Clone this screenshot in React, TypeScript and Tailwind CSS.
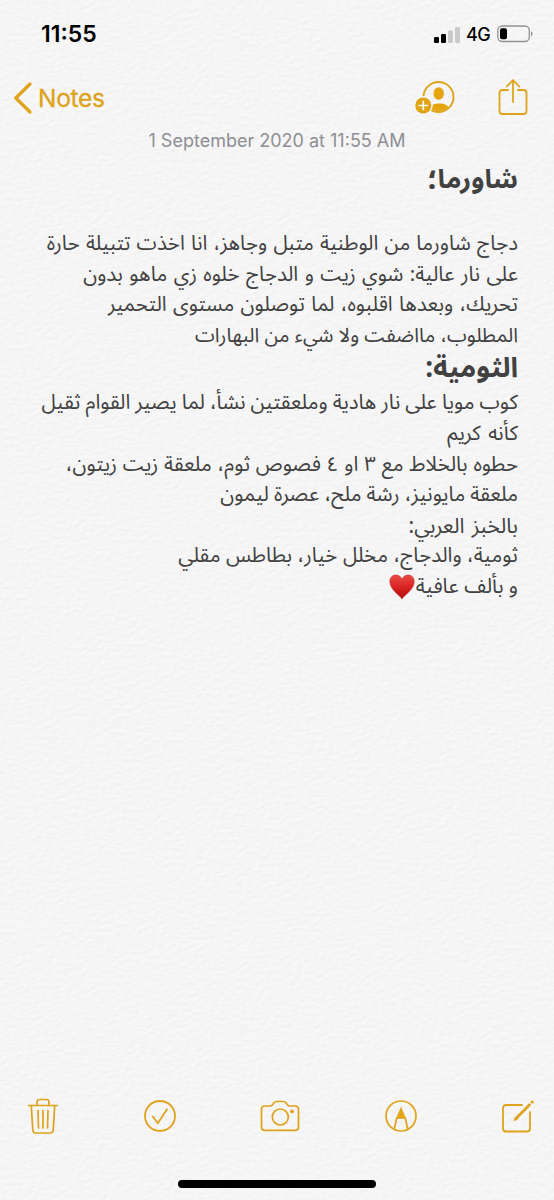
import React from "react";

type Line = { text: string; kind?: "heading"; className: string };

const lines: Line[] = [
  { text: "شاورما؛", kind: "heading", className: "h-[35px] text-[26.5px]" },
  { text: "", className: "h-[32px]" },
  { text: "دجاج شاورما من الوطنية متبل وجاهز، انا اخذت تتبيلة حارة", className: "h-[30px] [word-spacing:0.8px]" },
  { text: "على نار عالية: شوي زيت و الدجاج خلوه زي ماهو بدون", className: "h-[31px] [word-spacing:1.1px]" },
  { text: "تحريك، وبعدها اقلبوه، لما توصلون مستوى التحمير", className: "h-[30px] [word-spacing:1.1px]" },
  { text: "المطلوب، مااضفت ولا شيء من البهارات", className: "h-[31px] text-[20px] [word-spacing:0px]" },
  { text: "الثومية:", kind: "heading", className: "h-[36px] text-[27.8px]" },
  { text: "كوب مويا على نار هادية وملعقتين نشأ، لما يصير القوام ثقيل", className: "h-[31px] [word-spacing:-0.3px]" },
  { text: "كأنه كريم", className: "h-[31px] [word-spacing:2px]" },
  { text: "حطوه بالخلاط مع ٣ او ٤ فصوص ثوم، ملعقة زيت زيتون،", className: "h-[31px] [word-spacing:0.5px]" },
  { text: "ملعقة مايونيز، رشة ملح، عصرة ليمون", className: "h-[30px] [word-spacing:-0.2px]" },
  { text: "بالخبز العربي:", className: "h-[31px] text-[21px] [word-spacing:2px]" },
  { text: "ثومية، والدجاج، مخلل خيار، بطاطس مقلي", className: "h-[30px] [word-spacing:0.2px]" },
];

function Paper() {
  return (
    <svg className="pointer-events-none absolute inset-0 h-full w-full" aria-hidden="true">
      <filter id="paper" x="0" y="0" width="100%" height="100%" colorInterpolationFilters="sRGB">
        <feTurbulence type="fractalNoise" baseFrequency="0.16 0.26" numOctaves="2" seed="4" />
        <feDiffuseLighting lightingColor="#ffffff" surfaceScale="0.18" diffuseConstant="1">
          <feDistantLight azimuth="60" elevation="74" />
        </feDiffuseLighting>
      </filter>
      <rect width="100%" height="100%" filter="url(#paper)" />
    </svg>
  );
}

function StatusBar() {
  return (
    <div className="flex h-[70px] items-start justify-between pl-[41px] pr-[21px]">
      <span className="mt-[20px] text-[23px] font-semibold leading-[28px] text-black">11:55</span>
      <div className="mt-[20px] flex h-[28px] items-center">
        <svg width="26" height="17" viewBox="0 0 26 17">
          <rect x="0" y="11" width="5" height="6" rx="1.3" />
          <rect x="7" y="8" width="5" height="9" rx="1.3" />
          <rect x="14" y="4.5" width="5" height="12.5" rx="1.3" fill="#cacaca" />
          <rect x="21" y="1" width="5" height="16" rx="1.3" fill="#cacaca" />
        </svg>
        <span className="ml-[6px] mt-[2px] w-[25px] text-[18px] font-medium leading-[28px] tracking-[-0.5px] text-black">4G</span>
        <svg className="ml-[6px]" width="36" height="18" viewBox="0 0 36 18">
          <rect x="0.8" y="1" width="31.5" height="15.5" rx="4.5" fill="none" stroke="#929292" strokeWidth="1.3" />
          <rect x="3" y="3.3" width="7" height="11" rx="2" />
          <path d="M34 6.2c2.1.9 2.1 4.3 0 5.2z" fill="#929292" />
        </svg>
      </div>
    </div>
  );
}

function NavBar() {
  return (
    <div className="flex h-[56px] items-center justify-between pl-[13px] pr-[26px]">
      <div className="flex items-center">
        <svg width="19" height="32" viewBox="0 0 19 32" fill="none" stroke="#dfa21b" strokeWidth="3.2" strokeLinecap="round" strokeLinejoin="round">
          <path d="M17 2 2.8 16 17 30" />
        </svg>
        <span className="ml-[6px] text-[24.5px] leading-[32px] tracking-[-0.3px] text-[#dfa21b] [-webkit-text-stroke:0.3px]">Notes</span>
      </div>
      <div className="flex items-center">
        <svg width="40" height="34" viewBox="0 0 40 34">
          <defs>
            <clipPath id="avatar"><circle cx="23.5" cy="16" r="14" /></clipPath>
          </defs>
          <circle cx="23.5" cy="16" r="15" fill="none" stroke="#dfa21b" strokeWidth="1.9" />
          <g clipPath="url(#avatar)" fill="#e5a50f">
            <ellipse cx="23.7" cy="12.5" rx="5.2" ry="6.2" />
            <path d="M12 31c1-6 6-8.500 12-8.500s10 2 12 8.500z" />
          </g>
          <circle cx="8.3" cy="24.5" r="9.5" fill="#f5f5f5" />
          <circle cx="8.3" cy="24.5" r="8" fill="#e2a312" />
          <path d="M8.300 19.700v9.600M3.500 24.500h9.600" stroke="#fff" strokeWidth="1.7" />
        </svg>
        <svg className="ml-[43px]" width="30" height="38" viewBox="0 0 30 38" fill="none" stroke="#dfa21b" strokeWidth="1.8" strokeLinecap="round" strokeLinejoin="round">
          <path d="M10 11H4.500Q1.500 11 1.500 14V32Q1.500 35 4.500 35h21q3 0 3-3V14q0-3-3-3H20M15 23V1.500M8.800 7.500 15 1l6.200 6.500" />
        </svg>
      </div>
    </div>
  );
}

function Heart() {
  return (
    <svg className="mr-[1px] shrink-0" width="26" height="26" viewBox="0 0 26 26">
      <defs>
        <linearGradient id="heart" x1="0" y1="0" x2="0" y2="1">
          <stop offset="0" stopColor="#e94b45" />
          <stop offset="0.5" stopColor="#d92522" />
          <stop offset="1" stopColor="#ad080d" />
        </linearGradient>
      </defs>
      <path d="M13 25C10.500 21 .8 15.500.8 7.600.8 3.600 3.500 1 6.800 1 9.800 1 12 2.800 13 5.200 14 2.800 16.200 1 19.200 1c3.300 0 6 2.600 6 6.600C25.200 15.500 15.500 21 13 25Z" fill="url(#heart)" stroke="#b7302d" strokeWidth=".6" />
    </svg>
  );
}

function Toolbar() {
  return (
    <div className="flex h-[40px] items-center justify-between pl-[27px] pr-[19px] text-[#dfa21b]">
      <svg width="32" height="38" viewBox="0 0 32 38" fill="none" stroke="currentColor" strokeWidth="1.7" strokeLinecap="round" strokeLinejoin="round">
        <path d="M1.500 8.500h29M10 8V5q0-2.500 2.500-2.500h7Q22 2.500 22 5v3M4.300 9l1.500 24q.2 3 3 3h14.400q2.800 0 3-3L27.700 9M11 13.500l.5 17.500M16 13.500V31M21 13.500 20.500 31" />
      </svg>
      <svg width="34" height="34" viewBox="0 0 34 34" fill="none" stroke="currentColor" strokeWidth="1.8" strokeLinecap="round" strokeLinejoin="round">
        <circle cx="17" cy="17" r="15" />
        <path d="m9.800 17.500 5 6.700L24 10.300" />
      </svg>
      <svg width="40" height="34" viewBox="0 0 40 34" fill="none" stroke="currentColor" strokeWidth="1.7" strokeLinejoin="round">
        <path d="M4.500 7h6q1 0 1.800-1L14 3.800Q15 2.500 16.500 2.500h7Q25 2.500 26 3.800l1.700 2.200q.8 1 1.800 1h6q3 0 3 3v18.300q0 3-3 3h-31q-3 0-3-3V10q0-3 3-3Z" />
        <circle cx="20.3" cy="18" r="8" />
        <circle cx="32" cy="12.3" r="1.9" fill="currentColor" stroke="none" />
      </svg>
      <svg width="34" height="34" viewBox="0 0 34 34" fill="none" stroke="currentColor" strokeWidth="1.7" strokeLinejoin="round">
        <circle cx="17" cy="17" r="15" />
        <path d="m10.300 30 2.500-11.200h8.400L23.700 30" />
        <path d="m17 8.500 4.200 10.300h-8.400Z" fill="#e5a50f" strokeWidth=".8" />
      </svg>
      <svg width="34" height="36" viewBox="0 0 34 36" fill="none" stroke="currentColor" strokeWidth="1.8" strokeLinecap="round" strokeLinejoin="round">
        <path d="M21 7H5Q2 7 2 10v20.500q0 3 3 3h21q3 0 3-3V14" />
        <path d="M14.500 21 28.500 6.800" strokeWidth="2.7" />
        <path d="m13 22.800 2.200-3.800 1.700 1.700Z" fill="currentColor" strokeWidth=".5" />
        <circle cx="31.2" cy="4" r="1.6" fill="currentColor" stroke="none" />
      </svg>
    </div>
  );
}

export default function App() {
  return (
    <div className="relative h-[1200px] w-[554px] overflow-hidden bg-[#f5f5f5] font-['Inter','Liberation_Sans',sans-serif]">
      <Paper />
      <div className="relative flex h-full flex-col">
        <StatusBar />
        <NavBar />
        <p className="mt-[4px] text-center text-[18px] leading-[22px] text-[#8e8e93]">1 September 2020 at 11:55 AM</p>
        <main dir="rtl" className="mt-[10px] flex-1 pr-[36px] font-['Noto_Sans_Arabic','Noto_Sans','DejaVu_Sans',sans-serif] text-[20.5px] text-[#414141]">
          {lines.map((line, i) => (
            <div key={i} className={line.className + " flex items-center whitespace-nowrap " + (line.kind ? "font-bold" : "")}>
              <span className="leading-[26px]">{line.text}</span>
            </div>
          ))}
          <div className="flex h-[31px] items-center whitespace-nowrap leading-[26px]">
            <span>و بألف عافية</span>
            <Heart />
          </div>
        </main>
        <Toolbar />
        <div className="mb-[12px] ml-[178px] mt-[44px] h-[8px] w-[198px] shrink-0 rounded-full bg-black" />
      </div>
    </div>
  );
}
